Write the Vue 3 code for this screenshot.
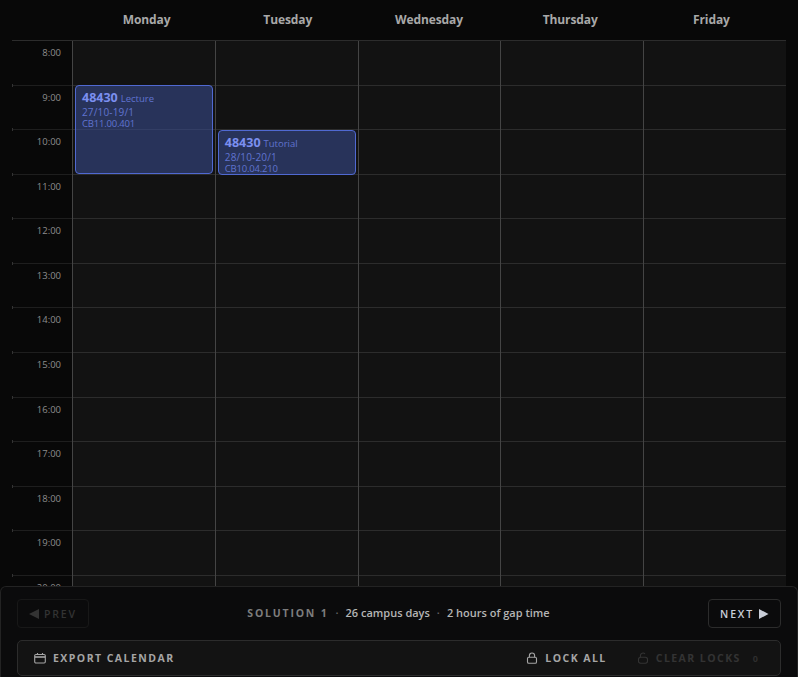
<template>
  <div class="planner">
    <div class="calendar">
      <div class="day-header">
        <div v-for="day in days" :key="day.name" class="day-name">{{ day.name }}</div>
      </div>
      <div class="grid-body">
        <div class="time-col">
          <div v-for="hour in hours" :key="hour" class="time-cell">
            <span class="time-label">{{ hour }}:00</span>
          </div>
        </div>
        <div v-for="day in days" :key="day.name" class="day-col">
          <div v-for="hour in hours" :key="hour" class="hour-cell"></div>
          <div
            v-for="ev in day.events"
            :key="ev.code + ev.type"
            class="event"
            :style="{ top: ev.top + 'px', height: ev.height + 'px' }"
          >
            <div class="event-title">
              <span class="event-code">{{ ev.code }}</span>
              <span class="event-type">{{ ev.type }}</span>
            </div>
            <div class="event-dates">{{ ev.dates }}</div>
            <div class="event-room">{{ ev.room }}</div>
          </div>
        </div>
      </div>
    </div>

    <div class="footer">
      <div class="nav-row">
        <button class="nav-btn disabled">
          <svg width="10" height="10" viewBox="0 0 10 10"><path d="M10 0V10L0 5Z" fill="currentColor" /></svg>
          PREV
        </button>
        <div class="summary">
          <span class="solution">SOLUTION 1</span>
          <span class="dot">·</span>
          <span>26 campus days</span>
          <span class="dot">·</span>
          <span>2 hours of gap time</span>
        </div>
        <button class="nav-btn next">
          NEXT
          <svg width="10" height="10" viewBox="0 0 10 10"><path d="M0 0V10L9.5 5Z" fill="#c9ced8" /></svg>
        </button>
      </div>
      <div class="action-row">
        <button class="action">
          <svg width="12" height="12" viewBox="0 0 12 12" fill="none" stroke="currentColor" stroke-width="1.1">
            <rect x="0.7" y="2.5" width="10.6" height="8.5" rx="1.2" />
            <path d="M0.7 5H11.3" stroke-width="1.6" />
            <path d="M3.5 1V3M8.5 1V3" />
          </svg>
          EXPORT CALENDAR
        </button>
        <div class="action-right">
          <button class="action lock">
            <svg width="12" height="12" viewBox="0 0 12 12" fill="none" stroke="currentColor" stroke-width="1.1">
              <rect x="1.5" y="5.2" width="9" height="6" rx="1.3" />
              <path d="M3.4 5.2V3.6a2.6 2.6 0 0 1 5.2 0V5.2" />
            </svg>
            LOCK ALL
          </button>
          <button class="action off">
            <svg width="12" height="12" viewBox="0 0 12 12" fill="none" stroke="currentColor" stroke-width="1.1">
              <rect x="1.5" y="5.2" width="9" height="6" rx="2.2" />
              <path d="M3.4 5.2V3.6a2.6 2.6 0 0 1 4.6-1.6" />
            </svg>
            CLEAR LOCKS
            <span class="count">0</span>
          </button>
        </div>
      </div>
    </div>
  </div>
</template>

<script setup>
const hours = [8, 9, 10, 11, 12, 13, 14, 15, 16, 17, 18, 19, 20];

const days = [
  {
    name: 'Monday',
    events: [
      { code: '48430', type: 'Lecture', dates: '27/10-19/1', room: 'CB11.00.401', top: 43.6, height: 89 },
    ],
  },
  {
    name: 'Tuesday',
    events: [
      { code: '48430', type: 'Tutorial', dates: '28/10-20/1', room: 'CB10.04.210', top: 88.6, height: 45 },
    ],
  },
  { name: 'Wednesday', events: [] },
  { name: 'Thursday', events: [] },
  { name: 'Friday', events: [] },
];
</script>

<style>
html,
body {
  margin: 0;
  background: #080808;
}
</style>

<style scoped>
.planner {
  height: 677px;
  display: flex;
  flex-direction: column;
  overflow: hidden;
  background: #080808;
  font-family: "Open Sans", "Noto Sans", sans-serif;
  color: #bbb;
}

.calendar {
  flex: 1;
  min-height: 0;
  overflow: hidden;
  padding: 0 12px;
}

/* header columns are a little narrower than the grid below */
.day-header {
  display: grid;
  grid-template-columns: repeat(5, 1fr);
  height: 41px;
  padding: 0 4px 0 64px;
  border-bottom: 1px solid #2c2c2c;
  box-sizing: border-box;
}

.day-name {
  display: flex;
  align-items: center;
  justify-content: center;
  font-size: 12px;
  font-weight: 700;
  letter-spacing: -0.1px;
  color: #a8a8a8;
  padding-bottom: 2px;
}

.grid-body {
  display: grid;
  grid-template-columns: 60px repeat(5, 1fr);
}

.time-cell,
.hour-cell {
  height: 44.58px;
  box-sizing: border-box;
  border-bottom: 1px solid #2c2c2c;
}

.time-cell {
  border-bottom-color: #1e1e1e;
  padding: 5px 11px 0 0;
  text-align: right;
  position: relative;
}

.time-cell::after {
  content: "";
  position: absolute;
  left: 0;
  bottom: -2px;
  width: 1px;
  height: 3px;
  background: #333;
}

.time-label {
  font-size: 9.5px;
  line-height: 14px;
  color: #8d8d8d;
  display: block;
}

.day-col {
  position: relative;
  background: #121212;
  border-left: 1px solid #444;
}

.event {
  position: absolute;
  left: 2px;
  right: 2px;
  box-sizing: border-box;
  padding: 4px 6px 0;
  overflow: hidden;
  border: 1px solid #5069d2;
  border-radius: 4px;
  background: rgba(58, 78, 150, 0.55);
  color: #6073d0;
  font-size: 10px;
  font-weight: 500;
  line-height: 12px;
}

.event-title {
  line-height: 15px;
  white-space: nowrap;
}

.event-code {
  font-size: 12.5px;
  font-weight: 700;
  color: #7b8ff0;
  margin-right: 3px;
}

.event-type {
  font-size: 9.5px;
}

.event-dates {
  letter-spacing: 0.15px;
  white-space: nowrap;
}

.event-room {
  font-size: 9.5px;
  letter-spacing: -0.2px;
  white-space: nowrap;
}

.footer {
  flex: none;
  height: 91px;
  box-sizing: border-box;
  padding: 12px 16px 0;
  display: flex;
  flex-direction: column;
  gap: 12px;
  background: #0b0b0c;
  border: 1px solid #232323;
  border-bottom: 0;
  border-radius: 6px 6px 0 0;
}

.nav-row {
  display: flex;
  align-items: center;
  justify-content: space-between;
  height: 29px;
  flex: none;
}

button {
  font-family: inherit;
  background: none;
  border: 0;
  padding: 0;
  display: inline-flex;
  align-items: center;
  cursor: pointer;
}

button svg {
  flex: none;
}

.nav-btn {
  height: 29px;
  box-sizing: border-box;
  justify-content: center;
  gap: 5px;
  font-size: 10.5px;
  font-weight: 600;
  letter-spacing: 1.8px;
  border: 1px solid #2c2c2c;
  border-radius: 4px;
  color: #c9ced8;
}

.nav-btn.disabled {
  width: 72px;
  color: #333;
  border-color: #181818;
}

.nav-btn.next {
  width: 73px;
}

.summary {
  display: flex;
  align-items: center;
  gap: 7px;
  font-size: 11px;
  font-weight: 600;
  line-height: 14px;
  color: #b5b5b5;
  padding-bottom: 2px;
}

.solution {
  font-size: 10.5px;
  letter-spacing: 1.8px;
  color: #7d7d7d;
  font-weight: 700;
}

.dot {
  color: #666;
}

.action-row {
  flex: none;
  height: 36px;
  box-sizing: border-box;
  padding: 0 22px 0 16px;
  display: flex;
  align-items: center;
  justify-content: space-between;
  background: #131313;
  border: 1px solid #2c2c2c;
  border-radius: 5px;
}

.action-right {
  display: flex;
  align-items: center;
  gap: 30px;
}

.action {
  gap: 7px;
  font-size: 10.5px;
  font-weight: 700;
  letter-spacing: 1.45px;
  color: #a5a5a5;
}

.action.off {
  color: #333;
}

.count {
  margin-left: 5px;
  font-size: 9px;
  letter-spacing: 0;
  color: #2e2e2e;
}
</style>
